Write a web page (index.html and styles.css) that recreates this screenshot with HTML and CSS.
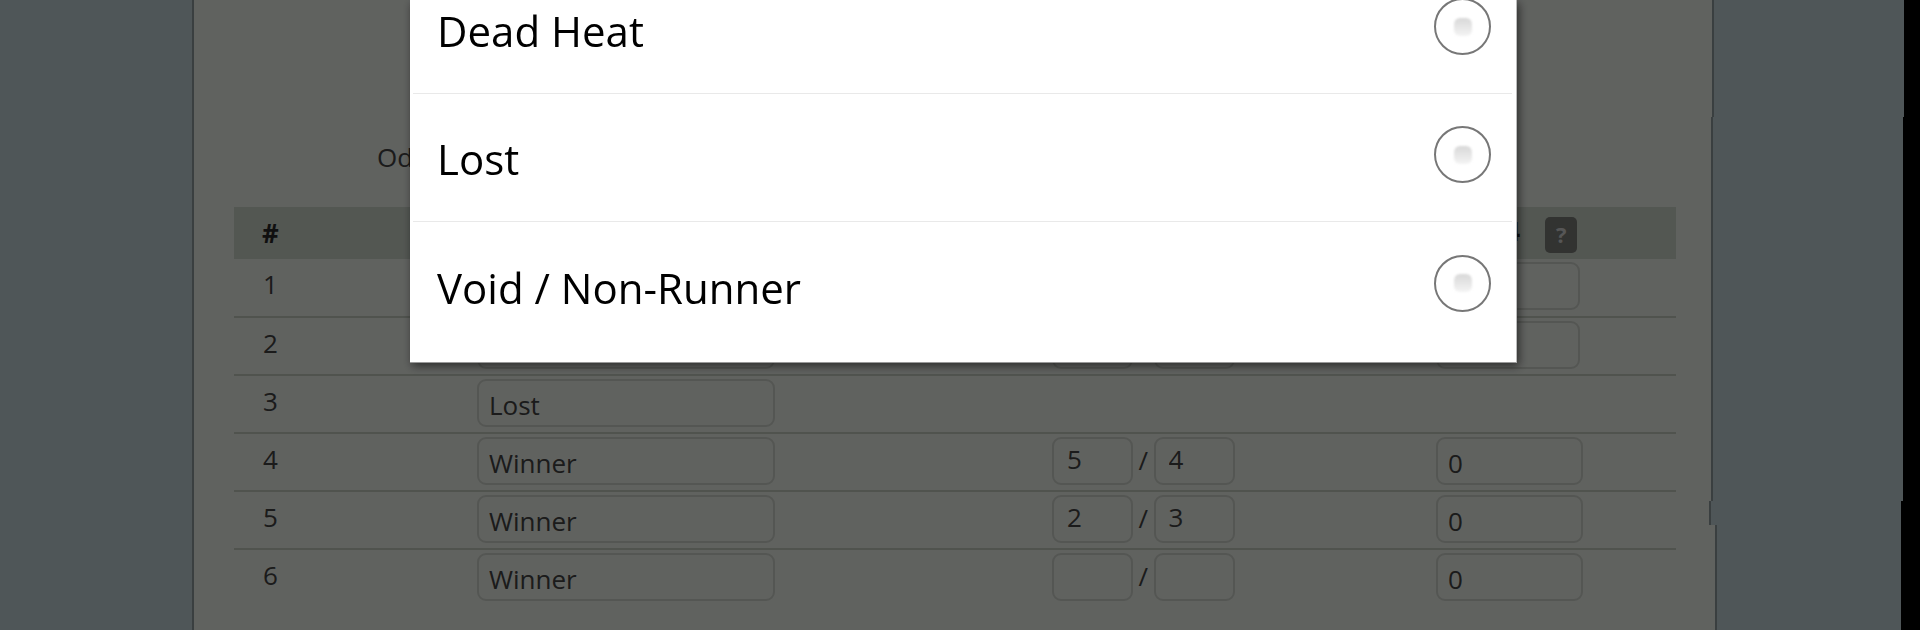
FILE: index.html
```html
<!DOCTYPE html>
<html lang="en">

<head>
    <meta charset="UTF-8">
    <meta name="viewport" content="width=device-width, initial-scale=1.0">
    <title>Settle Bet</title>
    <link rel="stylesheet" href="styles.css">
</head>

<body>
    <div class="page">
        <div class="gutter"></div>

        <div class="panel">
            <p class="odds-label">Odds</p>
            <table class="legs">
                <thead>
                    <tr>
                        <th class="col-num">#</th>
                        <th class="col-result">Result</th>
                        <th class="col-odds">Odds</th>
                        <th class="col-rule">Rule 4<span class="help">?</span></th>
                    </tr>
                </thead>
                <tbody>
                    <tr>
                        <td>1</td>
                        <td><select class="field"><option>Winner</option></select></td>
                        <td><input class="field odds" value="1"> <span class="slash">/</span> <input class="field odds" value="2"></td>
                        <td><input class="field rule narrow" value="0"></td>
                    </tr>
                    <tr>
                        <td>2</td>
                        <td><select class="field"><option>Winner</option></select></td>
                        <td><input class="field odds" value="1"> <span class="slash">/</span> <input class="field odds" value="1"></td>
                        <td><input class="field rule narrow" value="0"></td>
                    </tr>
                    <tr>
                        <td>3</td>
                        <td><select class="field"><option>Lost</option></select></td>
                        <td></td>
                        <td></td>
                    </tr>
                    <tr>
                        <td>4</td>
                        <td><select class="field"><option>Winner</option></select></td>
                        <td><input class="field odds" value="5"> <span class="slash">/</span> <input class="field odds" value="4"></td>
                        <td><input class="field rule" value="0"></td>
                    </tr>
                    <tr>
                        <td>5</td>
                        <td><select class="field"><option>Winner</option></select></td>
                        <td><input class="field odds" value="2"> <span class="slash">/</span> <input class="field odds" value="3"></td>
                        <td><input class="field rule" value="0"></td>
                    </tr>
                    <tr>
                        <td>6</td>
                        <td><select class="field"><option>Winner</option></select></td>
                        <td><input class="field odds" value=""> <span class="slash">/</span> <input class="field odds" value=""></td>
                        <td><input class="field rule" value="0"></td>
                    </tr>
                </tbody>
            </table>
        </div>

        <!-- the capture is torn here, the edge jumps a few px on the way down -->
        <div class="side">
            <div class="side-part part-a"></div>
            <div class="side-part part-b"></div>
            <div class="side-part part-c"></div>
            <div class="side-part part-d"></div>
        </div>
    </div>

    <div class="scrim">
        <div class="dialog">
            <div class="choice">
                <span class="choice-text">Dead Heat</span>
                <span class="radio"><span class="radio-dot"></span></span>
            </div>
            <div class="choice">
                <span class="choice-text">Lost</span>
                <span class="radio"><span class="radio-dot"></span></span>
            </div>
            <div class="choice">
                <span class="choice-text">Void / Non-Runner</span>
                <span class="radio"><span class="radio-dot"></span></span>
            </div>
        </div>
    </div>
</body>

</html>
```

FILE: styles.css
```css
body,
html {
    margin: 0;
    padding: 0;
    height: 100%;
    overflow: hidden;
    background: #000;
    font-family: "Open Sans", "Noto Sans", sans-serif;
}

.page {
    display: flex;
    height: 100vh;
}

.gutter {
    width: 192px;
    flex: none;
    background: #c6d8dd;
}

.panel {
    width: 1524px;
    flex: none;
    box-sizing: border-box;
    padding: 140px 0 0 40px;
    background: #f0f4ee;
    border-left: 2px solid #929da0;
}

.odds-label {
    margin: 0 0 33px;
    padding-left: 143px;
    font-size: 26px;
    line-height: 34px;
    color: #444;
}

/* table */
.legs {
    table-layout: fixed;
    width: 1442px;
    border-collapse: collapse;
    color: #444;
    font-size: 26px;
}

.legs th {
    box-sizing: border-box;
    height: 52px;
    padding: 0;
    background: #d0d9ce;
    color: #2a2a2a;
    font-weight: bold;
    text-align: left;
}

.legs td {
    height: 58px;
    box-sizing: border-box;
    padding: 3px 9px 0;
    vertical-align: top;
    border-bottom: 2px solid #c8cfc4;
}

.legs tr:last-child td {
    border-bottom: 0;
}

.legs td:first-child {
    padding: 8px 0 0 29px;
    line-height: 34px;
}

.legs .col-num {
    width: 234px;
    padding-left: 28px;
}

.col-result {
    width: 575px;
}

.col-odds {
    width: 384px;
}

.legs .col-rule {
    width: 249px;
    padding-left: 14px;
}

.help {
    display: inline-block;
    width: 32px;
    height: 36px;
    margin-left: 25px;
    line-height: 34px;
    border-radius: 5px;
    background: #7d7f7a;
    color: #d8d8d8;
    font-size: 22px;
    text-align: center;
    vertical-align: middle;
}

.field {
    box-sizing: border-box;
    height: 48px;
    margin: 0;
    padding: 3px 10px 0;
    appearance: none;
    border: 2px solid #d2d7cf;
    border-radius: 9px;
    background: #f0f4ee;
    color: #444;
    font: 26px "Open Sans", "Noto Sans", sans-serif;
    vertical-align: top;
}

select.field {
    display: block;
    width: 298px;
}

.odds {
    width: 81px;
    padding: 0 13px 4px;
}

.slash {
    display: inline-block;
    width: 17px;
    margin: 0 -5px;
    text-align: center;
    line-height: 46px;
}

.rule {
    width: 147px;
}

.narrow {
    width: 144px;
}

/* right margin */
.side {
    width: 188px;
    flex: none;
    display: flex;
    flex-direction: column;
}

.side-part {
    background: #c6d8dd;
    border-left: 2px solid #929da0;
}

.part-a {
    height: 117px;
    margin-left: -4px;
}

.part-b {
    height: 384px;
    margin-left: -5px;
    margin-right: 1px;
}

.part-c {
    height: 24px;
    margin-left: -7px;
    margin-right: 3px;
}

.part-d {
    flex: 1;
    margin-left: -1px;
    margin-right: 3px;
}

/* dialog on top of the dimmed page */
.scrim {
    position: fixed;
    top: 0;
    left: 0;
    right: 0;
    bottom: 0;
    background: rgba(0, 0, 0, 0.6);
}

.dialog {
    position: absolute;
    top: 0;
    left: 410px;
    width: 1107px;
    height: 363px;
    box-sizing: border-box;
    padding: 0 4px 0 3px;
    overflow: hidden;
    background: #fff;
    border-right: 1px solid #bbb;
    border-bottom: 1px solid #999;
    box-shadow: 2px 3px 9px rgba(0, 0, 0, 0.55);
}

.choice {
    display: flex;
    align-items: center;
    justify-content: space-between;
    box-sizing: border-box;
    height: 128px;
    padding: 0 21px 0 24px;
    border-bottom: 1px solid #e9e9e9;
}

.choice:first-child {
    margin-top: -34px;
}

.choice:last-child {
    border-bottom: 0;
}

.choice-text {
    margin-top: 2px;
    font-size: 42px;
    color: #000;
}

.radio {
    display: flex;
    align-items: center;
    justify-content: center;
    box-sizing: border-box;
    width: 57px;
    height: 57px;
    margin-top: -6px;
    border: 2.5px solid #777;
    border-radius: 50%;
}

.radio-dot {
    width: 18px;
    height: 18px;
    border-radius: 6px;
    background: linear-gradient(#d8d8d8, #f4f4f4);
    filter: blur(1px);
}
```
